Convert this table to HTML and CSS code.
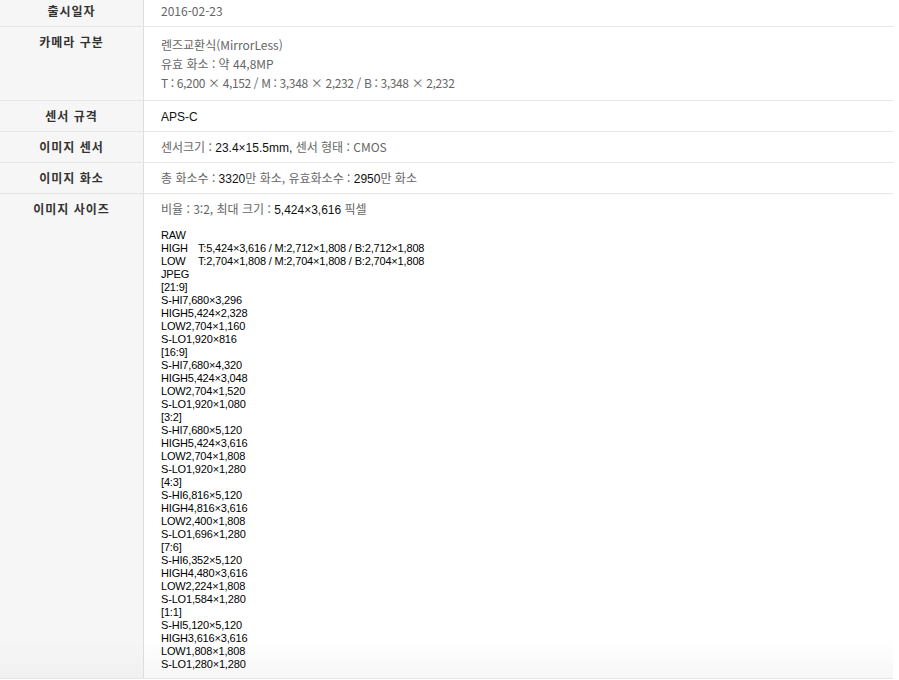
FILE: index.html
```html
<!DOCTYPE html>
<html lang="ko">
<head>
    <meta charset="UTF-8">
    <title>제품 사양</title>
    <link rel="stylesheet" href="styles.css">
</head>
<body>
    <div class="spec-wrap">
        <table class="spec-table">
            <tr>
                <th>출시일자</th>
                <td>2016-02-23</td>
            </tr>
            <tr>
                <th>카메라 구분</th>
                <td class="multi">
                    <div>렌즈교환식(MirrorLess)</div>
                    <div>유효 화소 : 약 44,8MP</div>
                    <div class="tight">T : 6,200 × 4,152 / M : 3,348 × 2,232 / B : 3,348 × 2,232</div>
                </td>
            </tr>
            <tr>
                <th>센서 규격</th>
                <td><span class="num">APS-C</span></td>
            </tr>
            <tr>
                <th>이미지 센서</th>
                <td>센서크기 : <span class="num">23.4×15.5mm,</span> 센서 형태 : CMOS</td>
            </tr>
            <tr>
                <th>이미지 화소</th>
                <td>총 화소수 : <span class="num">3320</span>만 화소, 유효화소수 : <span class="num">2950</span>만 화소</td>
            </tr>
            <tr class="last">
                <th>이미지 사이즈</th>
                <td>
                    비율 : 3:2, 최대 크기 : <span class="num">5,424×3,616</span> 픽셀
                    <div class="size-list">
                        <div>RAW</div>
                        <div><span class="tab">HIGH</span>T:5,424×3,616 / M:2,712×1,808 / B:2,712×1,808</div>
                        <div><span class="tab">LOW</span>T:2,704×1,808 / M:2,704×1,808 / B:2,704×1,808</div>
                        <div>JPEG</div>
                        <div>[21:9]</div>
                        <div>S-HI7,680×3,296</div>
                        <div>HIGH5,424×2,328</div>
                        <div>LOW2,704×1,160</div>
                        <div>S-LO1,920×816</div>
                        <div>[16:9]</div>
                        <div>S-HI7,680×4,320</div>
                        <div>HIGH5,424×3,048</div>
                        <div>LOW2,704×1,520</div>
                        <div>S-LO1,920×1,080</div>
                        <div>[3:2]</div>
                        <div>S-HI7,680×5,120</div>
                        <div>HIGH5,424×3,616</div>
                        <div>LOW2,704×1,808</div>
                        <div>S-LO1,920×1,280</div>
                        <div>[4:3]</div>
                        <div>S-HI6,816×5,120</div>
                        <div>HIGH4,816×3,616</div>
                        <div>LOW2,400×1,808</div>
                        <div>S-LO1,696×1,280</div>
                        <div>[7:6]</div>
                        <div>S-HI6,352×5,120</div>
                        <div>HIGH4,480×3,616</div>
                        <div>LOW2,224×1,808</div>
                        <div>S-LO1,584×1,280</div>
                        <div>[1:1]</div>
                        <div>S-HI5,120×5,120</div>
                        <div>HIGH3,616×3,616</div>
                        <div>LOW1,808×1,808</div>
                        <div>S-LO1,280×1,280</div>
                    </div>
                </td>
            </tr>
        </table>
    </div>
</body>
</html>
```

FILE: styles.css
```css
body {
    margin: 0;
    background-color: #ffffff;
    font-family: "Noto Sans CJK KR", "Liberation Sans", sans-serif;
}
.spec-wrap {
    margin-top: -4px;
    width: 893px;
}
.spec-table {
    width: 100%;
    border-collapse: collapse;
}
.spec-table th {
    width: 143px;
    height: 14px;
    padding: 8px 0;
    background-color: #f6f6f6;
    border-right: 1px solid #dedede;
    border-bottom: 1px solid #e6e6e6;
    font-size: 12px;
    line-height: 14px;
    font-weight: bold;
    letter-spacing: 1px;
    color: #333;
    text-align: center;
    vertical-align: top;
}
.spec-table td {
    height: 14px;
    padding: 8px 17px;
    border-bottom: 1px solid #e6e6e6;
    font-size: 12px;
    line-height: 14px;
    color: #666;
    vertical-align: top;
}
.spec-table td.multi {
    line-height: 19px;
}
.tight {
    letter-spacing: -0.36px;
}
.num {
    font-family: "Liberation Sans", sans-serif;
    line-height: 10px;
    color: #111;
}
.size-list {
    margin-top: 13px;
    font-family: "Liberation Sans", sans-serif;
    font-size: 11px;
    line-height: 13px;
    letter-spacing: -0.17px;
    color: #000;
}
.tab {
    display: inline-block;
    width: 37px;
}
.spec-table tr.last th {
    padding-bottom: 7px;
    background: linear-gradient(to bottom, #f6f6f6 calc(100% - 40px), #f0f0f0);
}
.spec-table tr.last td {
    padding-bottom: 7px;
    background: linear-gradient(to bottom, #ffffff calc(100% - 40px), #f6f6f6);
}
```
